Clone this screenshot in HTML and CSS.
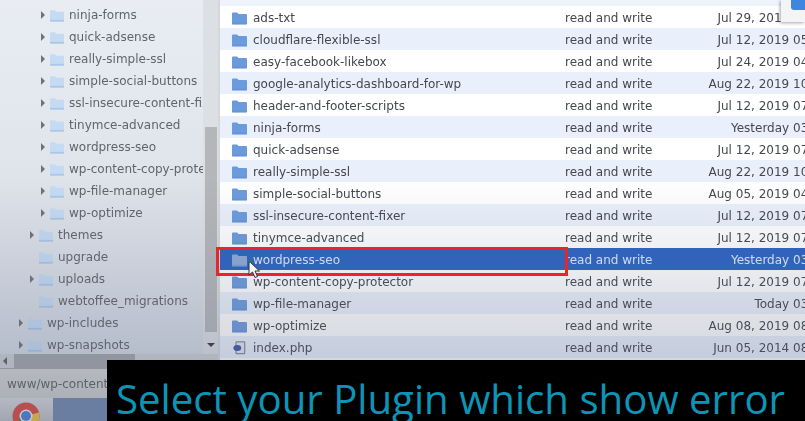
FILE: index.html
```html
<!DOCTYPE html>
<html lang="en">
<head>
<meta charset="utf-8">
<title>File manager</title>
<link rel="stylesheet" href="styles.css">
</head>
<body>
<svg class="defs" width="0" height="0" aria-hidden="true">
  <symbol id="folder" viewBox="0 0 16 14">
    <path d="M0 2.200C0 1.400.5 1 1.200 1h4.300l1.600 1.800h7.700c.7 0 1.200.5 1.200 1.200v8.800c0 .7-.5 1.200-1.200 1.200H1.200C.5 14 0 13.500 0 12.800z" fill="currentColor"/>
    <path d="M0 12h16v2H0z" fill="#4f7fc4" opacity=".22"/>
  </symbol>
</svg>
<div class="app">
  <div class="main">
    <nav class="tree">
      <div class="node lvl3"><i class="arrow"></i><svg class="tf"><use href="#folder"/></svg><span>ninja-forms</span></div>
      <div class="node lvl3"><i class="arrow"></i><svg class="tf"><use href="#folder"/></svg><span>quick-adsense</span></div>
      <div class="node lvl3"><i class="arrow"></i><svg class="tf"><use href="#folder"/></svg><span>really-simple-ssl</span></div>
      <div class="node lvl3"><i class="arrow"></i><svg class="tf"><use href="#folder"/></svg><span>simple-social-buttons</span></div>
      <div class="node lvl3"><i class="arrow"></i><svg class="tf"><use href="#folder"/></svg><span>ssl-insecure-content-fixer</span></div>
      <div class="node lvl3"><i class="arrow"></i><svg class="tf"><use href="#folder"/></svg><span>tinymce-advanced</span></div>
      <div class="node lvl3"><i class="arrow"></i><svg class="tf"><use href="#folder"/></svg><span>wordpress-seo</span></div>
      <div class="node lvl3"><i class="arrow"></i><svg class="tf"><use href="#folder"/></svg><span>wp-content-copy-protector</span></div>
      <div class="node lvl3"><i class="arrow"></i><svg class="tf"><use href="#folder"/></svg><span>wp-file-manager</span></div>
      <div class="node lvl3"><i class="arrow"></i><svg class="tf"><use href="#folder"/></svg><span>wp-optimize</span></div>
      <div class="node lvl2"><i class="arrow"></i><svg class="tf"><use href="#folder"/></svg><span>themes</span></div>
      <div class="node lvl2"><i class="arrow none"></i><svg class="tf"><use href="#folder"/></svg><span>upgrade</span></div>
      <div class="node lvl2"><i class="arrow"></i><svg class="tf"><use href="#folder"/></svg><span>uploads</span></div>
      <div class="node lvl2"><i class="arrow none"></i><svg class="tf"><use href="#folder"/></svg><span>webtoffee_migrations</span></div>
      <div class="node lvl1"><i class="arrow"></i><svg class="tf"><use href="#folder"/></svg><span>wp-includes</span></div>
      <div class="node lvl1"><i class="arrow"></i><svg class="tf"><use href="#folder"/></svg><span>wp-snapshots</span></div>
    </nav>
    <div class="vscroll"><div class="vthumb"></div><i class="vdown"></i></div>
    <section class="list">
      <div class="row partial"></div>
      <div class="row"><svg class="lf"><use href="#folder"/></svg><span class="name">ads-txt</span><span class="perm">read and write</span><span class="date">Jul 29, 2019 05:10 PM</span></div>
      <div class="row alt"><svg class="lf"><use href="#folder"/></svg><span class="name">cloudflare-flexible-ssl</span><span class="perm">read and write</span><span class="date">Jul 12, 2019 05:10 PM</span></div>
      <div class="row"><svg class="lf"><use href="#folder"/></svg><span class="name">easy-facebook-likebox</span><span class="perm">read and write</span><span class="date">Jul 24, 2019 04:10 PM</span></div>
      <div class="row alt"><svg class="lf"><use href="#folder"/></svg><span class="name">google-analytics-dashboard-for-wp</span><span class="perm">read and write</span><span class="date">Aug 22, 2019 10:10 PM</span></div>
      <div class="row"><svg class="lf"><use href="#folder"/></svg><span class="name">header-and-footer-scripts</span><span class="perm">read and write</span><span class="date">Jul 12, 2019 07:10 PM</span></div>
      <div class="row alt"><svg class="lf"><use href="#folder"/></svg><span class="name">ninja-forms</span><span class="perm">read and write</span><span class="date">Yesterday 03:10 PM</span></div>
      <div class="row"><svg class="lf"><use href="#folder"/></svg><span class="name">quick-adsense</span><span class="perm">read and write</span><span class="date">Jul 12, 2019 07:10 PM</span></div>
      <div class="row alt"><svg class="lf"><use href="#folder"/></svg><span class="name">really-simple-ssl</span><span class="perm">read and write</span><span class="date">Aug 22, 2019 10:10 PM</span></div>
      <div class="row"><svg class="lf"><use href="#folder"/></svg><span class="name">simple-social-buttons</span><span class="perm">read and write</span><span class="date">Aug 05, 2019 04:10 PM</span></div>
      <div class="row alt"><svg class="lf"><use href="#folder"/></svg><span class="name">ssl-insecure-content-fixer</span><span class="perm">read and write</span><span class="date">Jul 12, 2019 07:10 PM</span></div>
      <div class="row"><svg class="lf"><use href="#folder"/></svg><span class="name">tinymce-advanced</span><span class="perm">read and write</span><span class="date">Jul 12, 2019 07:10 PM</span></div>
      <div class="row selected"><svg class="lf"><use href="#folder"/></svg><span class="name">wordpress-seo</span><span class="perm">read and write</span><span class="date">Yesterday 03:10 PM</span></div>
      <div class="row"><svg class="lf"><use href="#folder"/></svg><span class="name">wp-content-copy-protector</span><span class="perm">read and write</span><span class="date">Jul 12, 2019 07:10 PM</span></div>
      <div class="row alt"><svg class="lf"><use href="#folder"/></svg><span class="name">wp-file-manager</span><span class="perm">read and write</span><span class="date">Today 03:10 PM</span></div>
      <div class="row"><svg class="lf"><use href="#folder"/></svg><span class="name">wp-optimize</span><span class="perm">read and write</span><span class="date">Aug 08, 2019 08:10 PM</span></div>
      <div class="row alt"><svg class="lf phpf" viewBox="0 0 16 16"><path d="M4 1h10v13.500H4z" fill="#e6e9f0" stroke="#5c6678"/><ellipse cx="5.500" cy="8" rx="4.500" ry="3.500" fill="#3d55a8"/></svg><span class="name">index.php</span><span class="perm">read and write</span><span class="date">Jun 05, 2014 08:10 PM</span></div>
    </section>
  </div>
  <div class="hscroll"><i class="hleft"></i><div class="hthumb"></div></div>
  <div class="pathbar">www/wp-content</div>
  <div class="taskbar">
    <div class="start">
      <svg class="chrome" viewBox="0 0 28 28">
        <circle cx="14" cy="14" r="13.500" fill="#d8483c"/>
        <path d="M14 14L2.300 20.800A13.500 13.500 0 0 0 14 27.500c2 0 3.500-.5 3.500-.5z" fill="#3f9a52"/>
        <path d="M14 14l13-3.500a13.500 13.500 0 0 1-13 17z" fill="#e8c03c"/>
        <circle cx="14" cy="14" r="6.500" fill="#e8edf3"/>
        <circle cx="14" cy="14" r="5" fill="#4a7fd0"/>
      </svg>
    </div>
  </div>
  <div class="shade"></div>
  <div class="dialog"><i class="dialog-icon"></i></div>
  <div class="redbox"></div>
  <svg class="cursor" viewBox="0 0 14 20"><path d="M2 1v14l3.500-3 2.500 5.500 2.500-1L8 11h4.500z" fill="#f4f4f4" stroke="#333" stroke-width="1"/><circle cx="2.500" cy="1.500" r="1.500" fill="#2f7a3c"/></svg>
  <div class="caption">Select your Plugin which show error</div>
</div>
</body>
</html>
```
FILE: styles.css
```css
* { box-sizing: border-box; }
html, body { margin: 0; height: 100%; overflow: hidden; background: #000; }
.defs { position: absolute; }
.app {
  position: relative;
  width: 805px;
  height: 421px;
  overflow: hidden;
  display: flex;
  flex-direction: column;
  font: 12px/22px "DejaVu Sans", sans-serif;
  color: #555a62;
  background: #d5d7da;
}
.main { display: flex; height: 354px; flex: none; filter: blur(.4px); }

.tree {
  width: 203px;
  flex: none;
  padding-top: 4px;
  overflow: hidden;
  background: linear-gradient(#e9edf3, #dde2e9 60%, #d4dae3);
  color: #60656c;
}
.node { display: flex; align-items: center; height: 22px; white-space: nowrap; }
.lvl1 { padding-left: 19px; }
.lvl2 { padding-left: 30px; }
.lvl3 { padding-left: 41px; }
.arrow {
  flex: none;
  width: 4px;
  height: 8px;
  margin-right: 5px;
  border-left: 4px solid #6e7379;
  border-top: 4px solid transparent;
  border-bottom: 4px solid transparent;
}
.arrow.none { border-left-color: transparent; }
.tf { flex: none; width: 14px; height: 13px; margin-right: 5px; color: #c4dbf2; }

.vscroll {
  width: 15px;
  flex: none;
  position: relative;
  background: #dcdfe3;
  padding: 127px 1px 0 2px;
}
.vthumb { height: 205px; background: #b4b6b9; }
.vdown {
  position: absolute;
  left: 4px;
  top: 343px;
  border-top: 4px solid #35383c;
  border-left: 4px solid transparent;
  border-right: 4px solid transparent;
}

.list {
  flex: 1;
  min-width: 0;
  margin-left: 2px;
  background: #fff;
  height: 368px;
  overflow: hidden;
}
.row {
  display: flex;
  align-items: center;
  height: 22px;
  padding: 1px 0 0 12px;
  white-space: nowrap;
  width: 629px;
  color: #43484f;
  background: #fff;
}
.row.partial { height: 6px; background: #eef3fc; }
.row.alt { background: #eaf0fb; }
.row.selected { background: #2d63c2; color: #dfe8f7; }
.row.selected .lf { color: #8fa9d6; }
.lf { flex: none; width: 15px; height: 14px; margin-right: 6px; color: #6c9bdc; }
.phpf { color: inherit; }
.name { width: 312px; flex: none; overflow: hidden; }
.perm { width: 100px; flex: none; }
.date { flex: 1; text-align: right; }

.hscroll {
  height: 14px;
  flex: none;
  width: 218px;
  position: relative;
  background: #cdd0d3;
  padding: 0 83px 0 14px;
  filter: blur(.4px);
}
.hthumb { height: 14px; background: #a4a6a9; }
.hleft {
  position: absolute;
  left: 3px;
  top: 3px;
  border-right: 4px solid #5b5e62;
  border-top: 4px solid transparent;
  border-bottom: 4px solid transparent;
}
.pathbar {
  height: 30px;
  flex: none;
  padding: 2px 7px;
  line-height: 26px;
  color: #5c5f63;
  background: linear-gradient(#d5d5d4, #cbcbca);
  border-top: 1px solid #a5a7aa;
  white-space: nowrap;
  overflow: hidden;
  filter: blur(.4px);
}
.taskbar { flex: 1; background: #6f87ad; }
.start {
  width: 53px;
  height: 100%;
  background: linear-gradient(#d5d7da, #aeb2b8);
  padding: 4px 0 0 12px;
  overflow: hidden;
}
.chrome { display: block; width: 28px; height: 28px; }

.shade {
  position: absolute;
  inset: 0;
  pointer-events: none;
  background: linear-gradient(rgba(90,100,130,0) 42%, rgba(90,100,130,.26) 86%);
}
.dialog {
  position: absolute;
  right: 0;
  top: 0;
  width: 24px;
  height: 22px;
  padding-left: 10px;
  background: #f3f4f5;
  box-shadow: -1px 1px 3px rgba(0,0,0,.35);
}
.dialog-icon { display: block; width: 14px; height: 10px; background: #3f86e0; border-radius: 0 0 0 3px; }
.redbox {
  position: absolute;
  left: 216px;
  top: 247px;
  width: 352px;
  height: 29px;
  border: 3px solid #e8242c;
  pointer-events: none;
}
.cursor { position: absolute; left: 247px; top: 260px; width: 14px; height: 20px; }
.caption {
  position: absolute;
  left: 107px;
  right: 0;
  top: 360px;
  height: 61px;
  padding-left: 9px;
  background: #000;
  color: #0c95b6;
  font: 40.200px/78px "Open Sans", sans-serif;
  white-space: nowrap;
  overflow: hidden;
}
```
